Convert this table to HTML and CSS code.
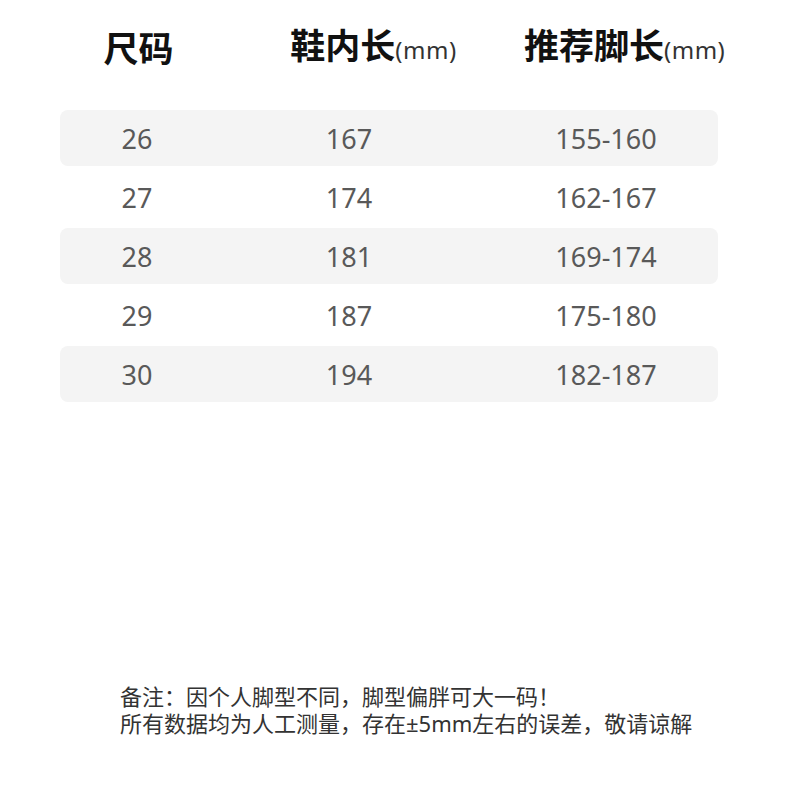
FILE: index.html
```html
<!DOCTYPE html>
<html lang="zh">
<head>
<meta charset="utf-8">
<link rel="stylesheet" href="styles.css">
</head>
<body>
<div class="page">
  <div class="head">
    <div class="hcell">尺码</div>
    <div class="hcell mid">鞋内长<span class="unit">(mm)</span></div>
    <div class="hcell last">推荐脚长<span class="unit">(mm)</span></div>
  </div>
  <div class="table">
    <div class="row shade"><span>26</span><span>167</span><span class="c3">155-160</span></div>
    <div class="row"><span>27</span><span>174</span><span class="c3">162-167</span></div>
    <div class="row shade"><span>28</span><span>181</span><span class="c3">169-174</span></div>
    <div class="row"><span>29</span><span>187</span><span class="c3">175-180</span></div>
    <div class="row shade"><span>30</span><span>194</span><span class="c3">182-187</span></div>
  </div>
  <div class="notes">
    <p>备注：因个人脚型不同，脚型偏胖可大一码！</p>
    <p>所有数据均为人工测量，存在±5mm左右的误差，敬请谅解</p>
  </div>
</div>
</body>
</html>
```
FILE: styles.css
```css
html, body {
  margin: 0;
  padding: 0;
  background: #fff;
}
.page {
  width: 800px;
  height: 800px;
  display: flex;
  flex-direction: column;
  font-family: "Noto Sans", "Noto Sans CJK SC", sans-serif;
}
.head {
  display: grid;
  grid-template-columns: 157px 307px 1fr;
  margin: 22px 0 0 60px;
  height: 44px;
  align-items: center;
}
.hcell {
  text-align: center;
  white-space: nowrap;
  font-family: "Noto Sans CJK SC", sans-serif;
  font-weight: 700;
  font-size: 35px;
  line-height: 44px;
  color: #111;
}
.hcell.mid {
  padding-left: 6px;
}
.hcell.last {
  text-align: left;
}
.unit {
  font-family: "Noto Sans", sans-serif;
  font-weight: 400;
  font-size: 24px;
  letter-spacing: 0.5px;
  color: #333;
}
.table {
  margin: 44px 82px 0 60px;
  display: flex;
  flex-direction: column;
  gap: 3px;
}
.row {
  display: grid;
  grid-template-columns: 154px 270px 1fr;
  height: 56px;
  align-items: center;
  border-radius: 8px;
  font-size: 27px;
  color: #595959;
}
.row span {
  text-align: center;
}
.row .c3 {
  padding-left: 10px;
}
.shade {
  background: #f4f4f4;
}
.notes {
  margin: auto 0 0 120px;
  padding-bottom: 63px;
  font-family: "Noto Sans", "Noto Sans CJK SC", sans-serif;
  font-size: 22px;
  line-height: 27px;
  color: #333;
}
.notes p {
  margin: 0;
  white-space: nowrap;
}
```
